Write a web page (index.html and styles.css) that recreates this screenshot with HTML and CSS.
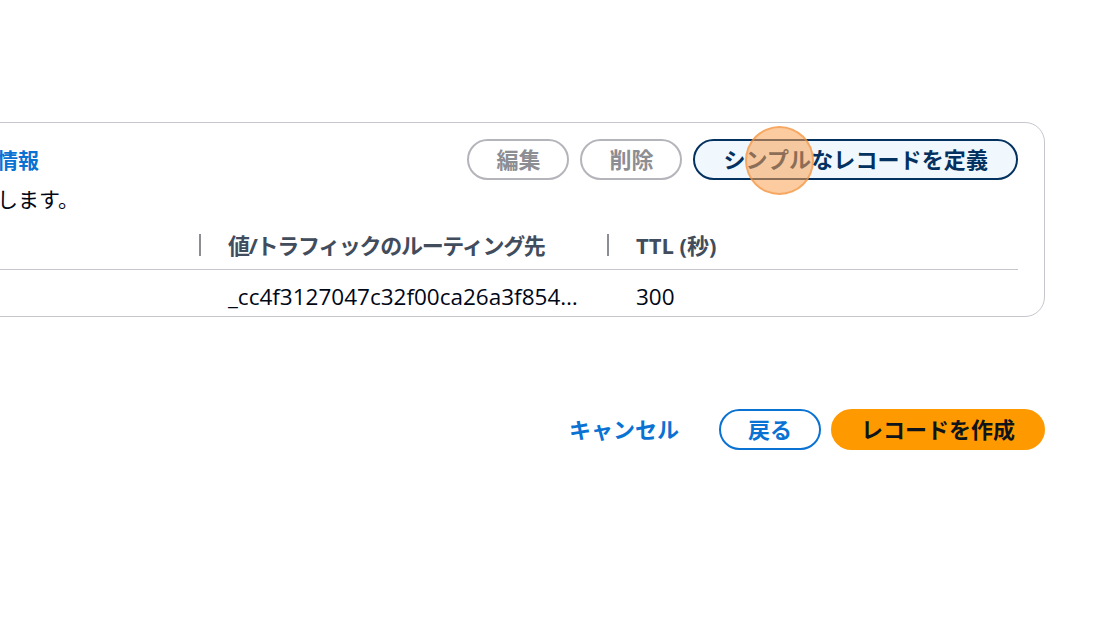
FILE: index.html
```html
<!DOCTYPE html>
<html lang="ja">
<head>
<meta charset="utf-8">
<title>レコードを作成</title>
<link rel="stylesheet" href="styles.css">
</head>
<body>
<div class="page">
  <section class="card">
    <div class="card-head">
      <div class="head-text">
        <h2 class="title">情報</h2>
        <p class="desc">します。</p>
      </div>
      <div class="head-actions">
        <button class="btn btn-disabled">編集</button>
        <button class="btn btn-disabled">削除</button>
        <button class="btn btn-define">シンプルなレコードを定義</button>
      </div>
    </div>
    <div class="table">
      <div class="cell th c1"></div>
      <div class="cell th c2 sep">値/トラフィックのルーティング先</div>
      <div class="cell th c3 sep">TTL (秒)</div>
      <div class="cell td c1"></div>
      <div class="cell td c2">_cc4f3127047c32f00ca26a3f854…</div>
      <div class="cell td c3">300</div>
    </div>
  </section>
  <div class="actions">
    <button class="btn btn-link">キャンセル</button>
    <button class="btn btn-normal">戻る</button>
    <button class="btn btn-primary">レコードを作成</button>
  </div>
  <div class="cursor"></div>
</div>
</body>
</html>
```

FILE: styles.css
```css
* { box-sizing: border-box; }
html, body { margin: 0; padding: 0; background: #ffffff; }
body {
  font-family: "Open Sans", "Noto Sans CJK JP", sans-serif;
  color: #000716;
  width: 1120px;
  height: 626px;
  overflow: hidden;
}
.page {
  position: relative;
  padding: 122px 75px 0 0;
}
.card {
  margin-left: -42px;
  border: 1.5px solid #c6c6cd;
  border-radius: 20px;
  padding: 16px 26px 0 38px;
}
.card-head {
  display: flex;
  justify-content: space-between;
  align-items: flex-start;
}
.title {
  margin: 0;
  font-size: 21px;
  line-height: 42px;
  font-weight: 700;
  color: #0972d3;
}
.desc {
  margin: 0;
  font-size: 21px;
  line-height: 36px;
  color: #000716;
}
.head-actions {
  display: flex;
  gap: 11px;
}
.btn {
  font-family: inherit;
  font-size: 22px;
  font-weight: 700;
  height: 41px;
  line-height: 37px;
  padding: 0 27px;
  border-radius: 22px;
  border: 2px solid transparent;
  background: #ffffff;
  cursor: pointer;
  white-space: nowrap;
}
.btn-disabled {
  border-color: #b4b4bb;
  color: #8d8d94;
}
.btn-define {
  border-color: #033160;
  background: #f0f8fe;
  color: #033160;
  padding: 0 28px;
  letter-spacing: 0.1px;
}
.table {
  display: grid;
  grid-template-columns: 202px 408px 1fr;
}
.cell {
  position: relative;
  font-size: 22px;
  line-height: 24px;
  padding-left: 29px;
  white-space: nowrap;
}
.th {
  font-weight: 700;
  color: #414d5c;
  padding-top: 16px;
  padding-bottom: 12px;
  border-bottom: 1px solid #c6c6cd;
}
.th.c2 {
  letter-spacing: -1.3px;
}
.td {
  font-size: 22.5px;
  padding-top: 15px;
  padding-bottom: 7px;
  color: #000716;
}
.sep::before {
  content: "";
  position: absolute;
  left: 0;
  top: 17px;
  width: 2px;
  height: 22px;
  background: #8c8c94;
}
.actions {
  display: flex;
  justify-content: flex-end;
  align-items: center;
  gap: 10px;
  margin-top: 92px;
}
.btn-link {
  border-color: transparent;
  color: #0972d3;
  padding: 0 28px 0 20px;
  background: transparent;
}
.btn-normal {
  border-color: #0972d3;
  color: #0972d3;
  padding: 0 27px;
}
.btn-primary {
  background: #ff9900;
  border-color: #ff9900;
  color: #0f141a;
  padding: 0 28px;
}
.cursor {
  position: absolute;
  left: 745px;
  top: 126px;
  width: 69px;
  height: 69px;
  border-radius: 50%;
  background: rgba(250, 160, 80, 0.55);
  border: 2px solid rgba(240, 140, 50, 0.55);
}
```
